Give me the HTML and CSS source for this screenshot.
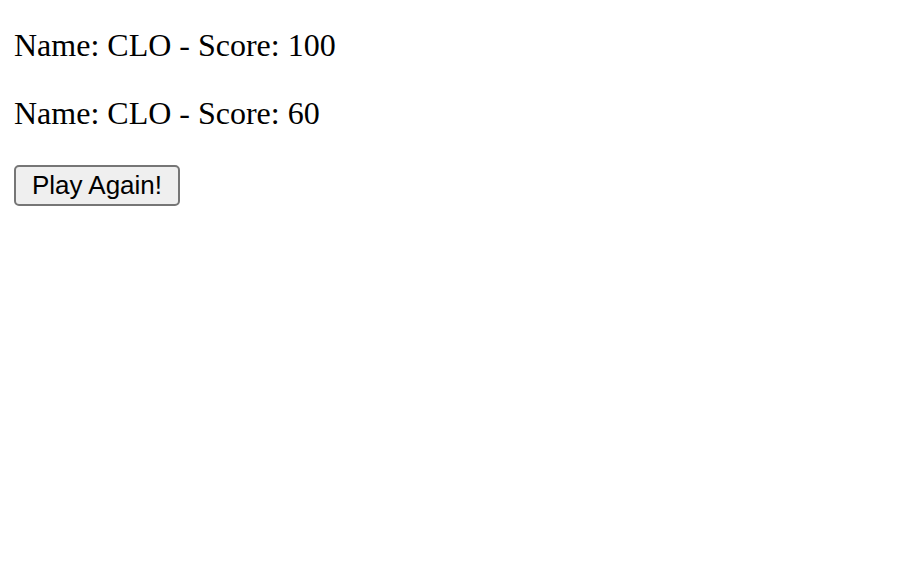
FILE: index.html
```html
<!DOCTYPE html>
<html>
<head>
<meta charset="utf-8">
<link rel="stylesheet" href="styles.css">
</head>
<body>
<div class="scores">
  <p class="score">Name: CLO - Score: 100</p>
  <p class="score">Name: CLO - Score: 60</p>
</div>
<button class="play">Play Again!</button>
</body>
</html>
```
FILE: styles.css
```css
html, body { background: #fff; }
body {
  margin: 14px;
  font-family: "Liberation Serif", "Times New Roman", serif;
  color: #000;
}
.score {
  font-size: 32px;
  line-height: 37px;
  margin: 13px 0 31px;
}
.play {
  display: block;
  font-family: "Liberation Sans", Arial, sans-serif;
  font-size: 26px;
  margin-top: 33px;
  padding: 0;
  height: 41px;
  width: 166px;
  background: #efefef;
  color: #000;
  border: 2px solid #767676;
  border-radius: 5px;
}
```
